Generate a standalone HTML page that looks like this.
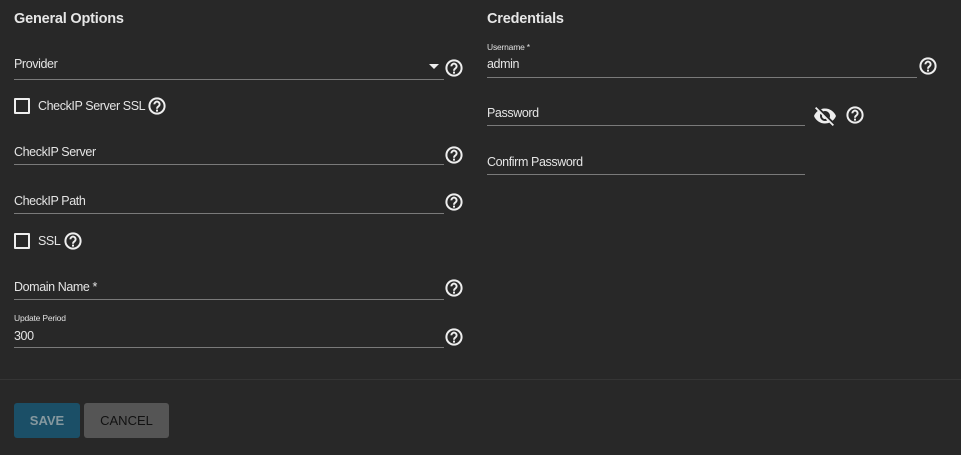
<!DOCTYPE html>
<html><head><meta charset="utf-8"><style>
*{margin:0;padding:0;box-sizing:border-box}
body{width:961px;height:455px;background:#282828;font-family:"Liberation Sans",Arial,sans-serif;color:#e8e8e8;position:relative;overflow:hidden}
.a{position:absolute}
.h{font-size:14.5px;font-weight:bold;color:#e6e6e6;letter-spacing:-0.2px}
.t{font-size:12.5px;color:#e4e4e4;letter-spacing:-0.4px}
.s{font-size:8.5px;color:#e0e0e0;letter-spacing:-0.2px}
.l{height:1px;background:#7a7a7a}
.cb{width:16px;height:16px;border:2px solid #eee;border-radius:1px}
.q{width:20px;height:20px}
.btn{border-radius:3px;font-size:13px;text-align:center;line-height:35px}
</style></head><body>
<svg width="0" height="0" style="position:absolute"><defs>
<symbol id="q" viewBox="0 0 20 20"><circle cx="10" cy="10" r="7.6" fill="none" stroke="#eee" stroke-width="2"/><path d="M7.4 8.3a2.6 2.6 0 1 1 4 2.1c-.9.6-1.4 1-1.4 2.3" fill="none" stroke="#eee" stroke-width="1.9"/><rect x="9" y="13.6" width="2" height="2" fill="#eee"/></symbol>
</defs></svg>

<div class="a h" style="left:14px;top:11px">General Options</div>
<div class="a h" style="left:487px;top:11px">Credentials</div>

<div class="a t" style="left:14px;top:57px">Provider</div>
<div class="a" style="left:429px;top:64px;width:0;height:0;border-left:5px solid transparent;border-right:5px solid transparent;border-top:5px solid #eee"></div>
<div class="a l" style="left:14px;top:79px;width:430px"></div>
<svg class="a q" style="left:444px;top:58px"><use href="#q"/></svg>

<div class="a cb" style="left:14px;top:98px"></div>
<div class="a t" style="left:38px;top:99px">CheckIP Server SSL</div>
<svg class="a q" style="left:147px;top:96px"><use href="#q"/></svg>

<div class="a t" style="left:14px;top:145px">CheckIP Server</div>
<div class="a l" style="left:14px;top:164px;width:430px"></div>
<svg class="a q" style="left:444px;top:145px"><use href="#q"/></svg>

<div class="a t" style="left:14px;top:194px">CheckIP Path</div>
<div class="a l" style="left:14px;top:213px;width:430px"></div>
<svg class="a q" style="left:444px;top:192px"><use href="#q"/></svg>

<div class="a cb" style="left:14px;top:233px"></div>
<div class="a t" style="left:38px;top:234px">SSL</div>
<svg class="a q" style="left:63px;top:231px"><use href="#q"/></svg>

<div class="a t" style="left:14px;top:280px">Domain Name *</div>
<div class="a l" style="left:14px;top:299px;width:430px"></div>
<svg class="a q" style="left:444px;top:278px"><use href="#q"/></svg>

<div class="a s" style="left:14px;top:313px">Update Period</div>
<div class="a t" style="left:14px;top:329px">300</div>
<div class="a l" style="left:14px;top:347px;width:430px"></div>
<svg class="a q" style="left:444px;top:327px"><use href="#q"/></svg>

<div class="a s" style="left:487px;top:42px">Username *</div>
<div class="a t" style="left:487px;top:57px">admin</div>
<div class="a l" style="left:487px;top:77px;width:430px"></div>
<svg class="a q" style="left:918px;top:56px"><use href="#q"/></svg>

<div class="a t" style="left:487px;top:106px">Password</div>
<div class="a l" style="left:487px;top:125px;width:318px"></div>
<svg class="a" style="left:813px;top:104px" width="24" height="24" viewBox="0 0 24 24"><path fill="#eee" d="M12 7c2.76 0 5 2.24 5 5 0 .65-.13 1.26-.36 1.830l2.92 2.92c1.51-1.26 2.7-2.890 3.43-4.75-1.73-4.390-6-7.5-11-7.5-1.4 0-2.74.25-3.98.7l2.16 2.16C10.74 7.13 11.35 7 12 7zM2 4.27l2.28 2.28.46.46C3.08 8.3 1.78 10.02 1 12c1.73 4.39 6 7.5 11 7.5 1.55 0 3.03-.3 4.38-.84l.42.42L19.730 22 21 20.73 3.27 3 2 4.27zM7.53 9.8l1.55 1.55c-.05.21-.08.43-.08.65 0 1.66 1.34 3 3 3 .22 0 .44-.03.65-.08l1.55 1.55c-.67.33-1.41.53-2.2.53-2.76 0-5-2.24-5-5 0-.79.2-1.53.53-2.2z"/></svg>
<svg class="a q" style="left:845px;top:105px"><use href="#q"/></svg>

<div class="a t" style="left:487px;top:155px">Confirm Password</div>
<div class="a l" style="left:487px;top:174px;width:318px"></div>

<div class="a" style="left:0;top:379px;width:961px;height:1px;background:#353535"></div>

<div class="a btn" style="left:14px;top:403px;width:66px;height:35px;background:#1b4f67;color:#86989f;font-weight:bold">SAVE</div>
<div class="a btn" style="left:84px;top:403px;width:85px;height:35px;background:#555555;color:#111">CANCEL</div>
</body></html>
